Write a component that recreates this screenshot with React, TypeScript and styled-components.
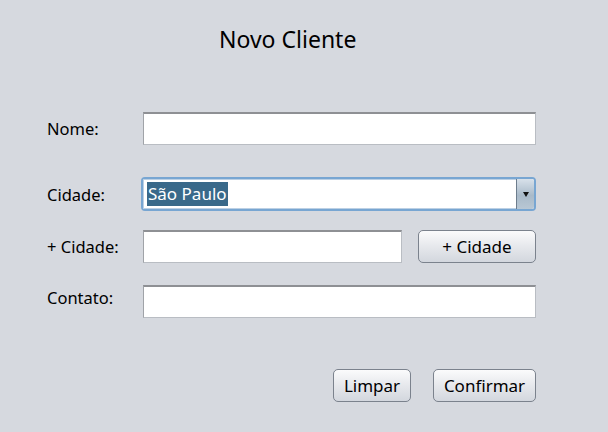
import styled, { createGlobalStyle } from "styled-components";

const GlobalStyle = createGlobalStyle`
  html, body {
    margin: 0;
    padding: 0;
    background: #d6d9df;
  }
  body {
    font-family: "Noto Sans", "Open Sans", sans-serif;
    color: #000;
  }
`;

const Window = styled.div`
  width: 608px;
  height: 432px;
  box-sizing: border-box;
  padding: 24px 72px 0 47px;
  background: #d6d9df;
  display: flex;
  flex-direction: column;
`;

const Title = styled.h1`
  margin: 0 0 0 172px;
  font-size: 23px;
  font-weight: 400;
  line-height: 30px;
  height: 30px;
`;

const Form = styled.div`
  margin-top: 58px;
  display: grid;
  grid-template-columns: 96px 1fr;
`;

const Label = styled.label<{ top: number; lift?: number }>`
  font-size: 16.5px;
  line-height: 33px;
  height: 33px;
  margin-top: ${(p) => p.top}px;
  transform: translateY(-${(p) => p.lift ?? 0}px);
`;

const Cell = styled.div<{ top: number }>`
  margin-top: ${(p) => p.top}px;
  display: flex;
  gap: 16px;
  height: 33px;
`;

const TextField = styled.div`
  flex: 1;
  box-sizing: border-box;
  height: 33px;
  background: #fff;
  border: 1px solid #b9bdc3;
  border-top: 2px solid #8e9094;
  border-left-color: #a0a3a8;
`;

const ComboRing = styled.div`
  flex: 1;
  box-sizing: border-box;
  height: 34px;
  margin-left: -2px;
  margin-top: -1px;
  border: 2px solid #78a6d2;
  border-radius: 4px;
  background: #fff;
  display: flex;
`;

const ComboValue = styled.div`
  flex: 1;
  display: flex;
  align-items: center;
  padding-left: 3px;
  border: 1px solid #bcd0e4;
  border-right: none;
`;

const Selected = styled.span`
  background: #39698a;
  color: #fff;
  font-size: 17px;
  line-height: 24px;
  padding: 0 1px;
`;

const ArrowButton = styled.div`
  width: 17px;
  border-left: 1px solid #6d7d8d;
  border-radius: 0 2px 2px 0;
  background: linear-gradient(#d8e1ea, #a9bac9 55%, #b8c7d4);
  display: flex;
  align-items: center;
  justify-content: center;
`;

const Triangle = styled.div`
  width: 0;
  height: 0;
  border-left: 3.5px solid transparent;
  border-right: 3.5px solid transparent;
  border-top: 5px solid #111;
`;

const Button = styled.button<{ w: number }>`
  width: ${(p) => p.w}px;
  height: 33px;
  box-sizing: border-box;
  padding: 0;
  border: 1px solid #7b828d;
  border-radius: 5px;
  background: linear-gradient(#fbfbfc, #e6e8ec 50%, #d3d7de 100%);
  font-family: "Noto Sans", "Open Sans", sans-serif;
  font-size: 17px;
  color: #000;
`;

const Actions = styled.div`
  margin-top: 51px;
  display: flex;
  justify-content: flex-end;
  gap: 22px;
`;

export default function App() {
  return (
    <>
      <GlobalStyle />
      <Window>
        <Title>Novo Cliente</Title>
        <Form>
          <Label top={0}>Nome:</Label>
          <Cell top={0}>
            <TextField />
          </Cell>
          <Label top={33}>Cidade:</Label>
          <Cell top={33}>
            <ComboRing>
              <ComboValue>
                <Selected>São Paulo</Selected>
              </ComboValue>
              <ArrowButton>
                <Triangle />
              </ArrowButton>
            </ComboRing>
          </Cell>
          <Label top={19}>+ Cidade:</Label>
          <Cell top={19}>
            <TextField />
            <Button w={118}>+ Cidade</Button>
          </Cell>
          <Label top={22} lift={4}>
            Contato:
          </Label>
          <Cell top={22}>
            <TextField />
          </Cell>
        </Form>
        <Actions>
          <Button w={78}>Limpar</Button>
          <Button w={103}>Confirmar</Button>
        </Actions>
      </Window>
    </>
  );
}
